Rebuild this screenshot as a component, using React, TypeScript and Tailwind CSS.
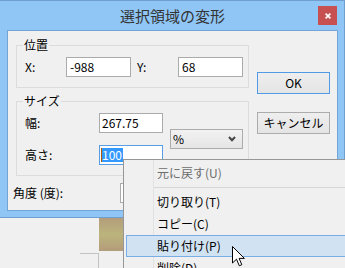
export default function App() {
  return (
    <div className="relative h-[268px] w-[345px] overflow-hidden bg-[#f0f0f0] font-['Noto_Sans_CJK_JP','Noto_Sans',sans-serif] text-[12px] text-black">
      {/* dialog window */}
      <div className="flex h-[218px] w-[345px] flex-col border-t border-r border-b border-[#6f9fcf] bg-[#8fc6f6] pb-[6px] pl-[7px] pr-[6px]">
        <div className="grid h-[29px] grid-cols-[1fr_auto_1fr] items-center">
          <div />
          <div className="text-[15px] leading-[20px] text-[#333]">選択領域の変形</div>
          <div className="mr-[1px] flex h-[19px] w-[19px] items-center justify-center justify-self-end bg-[#c75050]">
            <svg width="6" height="6" viewBox="0 0 6 6">
              <path d="M0.6 0.6 L5.4 5.4 M5.4 0.6 L0.6 5.4" stroke="#fff" strokeWidth="1.7" />
            </svg>
          </div>
        </div>

        <div className="flex flex-1 border border-[#72a5d6] bg-[#f0f0f0]">
          <div className="w-[241px] pl-[5px] pt-[6px]">
            <fieldset className="ml-[3px] w-[233px] border border-[#dcdcdc] pb-[10px]">
              <legend className="ml-[6px] px-[1px] text-[12px] leading-[16px]">位置</legend>
              <div className="flex h-[20px] items-center pl-[8px] pt-0 mt-[4px]">
                <span className="w-[41px] leading-[20px]">X:</span>
                <div className="h-[20px] w-[65px] border border-[#ababab] bg-white pl-[3px] leading-[18px]">-988</div>
                <span className="ml-[6px] w-[41px] leading-[20px]">Y:</span>
                <div className="h-[20px] w-[65px] border border-[#ababab] bg-white pl-[3px] leading-[18px]">68</div>
              </div>
            </fieldset>

            <fieldset className="mt-[5px] ml-[3px] w-[233px] border border-[#dcdcdc] pb-[10px]">
              <legend className="ml-[6px] px-[1px] text-[12px] leading-[16px]">サイズ</legend>
              <div className="mt-[4px] flex items-center pl-[8px]">
                <div className="flex flex-col gap-[12px]">
                  <div className="flex h-[20px] items-center">
                    <span className="w-[74px] leading-[20px]">幅:</span>
                    <div className="h-[20px] w-[64px] border border-[#ababab] bg-white pl-[2px] leading-[18px]">267.75</div>
                  </div>
                  <div className="flex h-[20px] items-center">
                    <span className="w-[74px] leading-[20px]">高さ:</span>
                    <div className="flex h-[20px] w-[64px] items-center border border-[#569de5] bg-white pl-[1px]">
                      <span className="h-[14px] w-px bg-[#b05a00]" />
                      <span className="bg-[#3399ff] pr-[1px] leading-[14px] text-white">100</span>
                    </div>
                  </div>
                </div>
                <div className="ml-[7px] flex h-[20px] w-[73px] items-center justify-between border border-[#acacac] bg-gradient-to-b from-[#f2f2f2] to-[#e5e5e5] pl-[2px] pr-[6px]">
                  <span className="leading-[18px]">%</span>
                  <svg width="8" height="6" viewBox="0 0 8 6">
                    <path d="M1 1 L4 4.2 L7 1" stroke="#444" strokeWidth="2" fill="none" />
                  </svg>
                </div>
              </div>
            </fieldset>

            <div className="mt-[7px] flex h-[20px] items-center">
              <span className="w-[107px] leading-[20px]">角度 (度):</span>
              <div className="h-[20px] w-[60px] border border-[#ababab] bg-white" />
            </div>
          </div>

          <div className="ml-[8px] flex flex-col gap-[18px] pt-[41px]">
            <div className="flex h-[22px] w-[73px] items-center justify-center border border-[#4f9be6] bg-gradient-to-b from-[#eeeeee] to-[#e4e4e4] leading-[20px]">
              OK
            </div>
            <div className="flex h-[22px] w-[73px] items-center justify-center border border-[#acacac] bg-gradient-to-b from-[#eeeeee] to-[#e4e4e4] leading-[20px]">
              キャンセル
            </div>
          </div>
        </div>
      </div>

      {/* background behind the dialog */}
      <div className="flex h-[50px]">
        <div className="w-[99px] pt-[35px]">
          <div className="ml-[80px] h-[20px] w-[19px] border-t border-r border-[#c3c3c3]" />
        </div>
        <div className="h-[33px] w-[24px] bg-gradient-to-b from-[#b39d7b] via-[#bbb47c] to-[#b39c7a]" />
      </div>

      {/* context menu */}
      <div className="absolute left-[123px] top-[159px] h-[120px] w-[240px] border border-[#979797] bg-[#f0f0f0] pt-[2px]">
        <div className="absolute top-0 bottom-0 left-[29px] w-px bg-[#e2e2e2]" />
        <div className="relative flex h-[22px] items-center pl-[33px] leading-[16px] text-[#6d6d6d]">元に戻す(U)</div>
        <div className="relative h-[7px] pt-[3px]">
          <div className="ml-[30px] h-px bg-[#d7d7d7]" />
        </div>
        <div className="relative flex h-[22px] items-center pl-[33px] leading-[16px]">切り取り(T)</div>
        <div className="relative flex h-[22px] items-center pl-[33px] leading-[16px]">コピー(C)</div>
        <div className="relative mx-[2px] flex h-[22px] items-center border border-[#78aee5] bg-[#d1e2f2] pl-[30px] leading-[16px]">
          貼り付け(P)
        </div>
        <div className="relative flex h-[22px] items-center pl-[33px] leading-[16px]">削除(D)</div>
      </div>

      {/* mouse pointer */}
      <svg className="absolute left-[232px] top-[246px]" width="14" height="22" viewBox="0 0 14 22">
        <path
          d="M0.5 0.5 V17 L4.5 13.2 L7.3 19.8 L9.8 18.7 L7.1 12.4 L12.4 12.4 Z"
          fill="#fff"
          stroke="#000"
          strokeWidth="1"
          strokeLinejoin="miter"
        />
      </svg>
    </div>
  );
}
